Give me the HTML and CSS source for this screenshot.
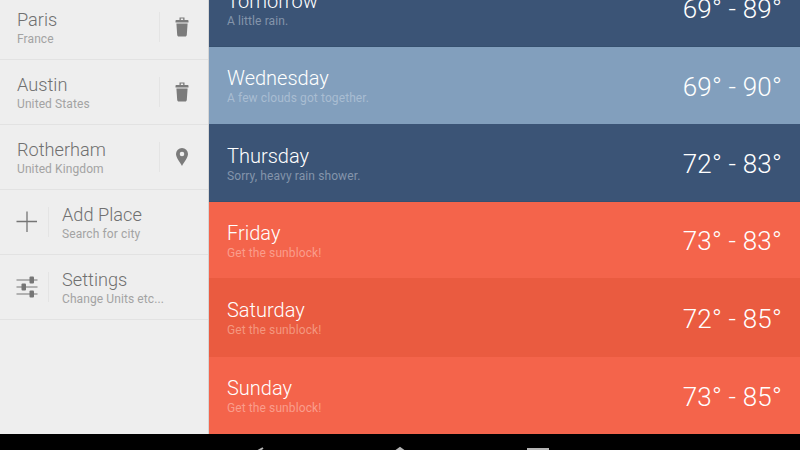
FILE: index.html
```html
<!DOCTYPE html>
<html lang="en">
<head>
<meta charset="utf-8">
<title>Weather</title>
<link rel="stylesheet" href="styles.css">
</head>
<body>
<div class="app">
  <aside class="side">
    <div class="place">
      <div class="text"><div class="name">Paris</div><div class="sub">France</div></div>
      <div class="action"><svg viewBox="0 0 14 20" width="14" height="20"><path fill-rule="evenodd" d="M4.500 .5h5v2.500h3.200c.5 0 .8.300.8.800v1.700H.5V3.800c0-.5.300-.8.800-.8h3.200z M5.800 1.600v1.400h2.400V1.600z M1.400 6.400h11.200l-.8 11.600c-.1.900-.7 1.500-1.600 1.500H3.800c-.9 0-1.500-.6-1.600-1.500z" fill="#7b7b7b"/></svg></div>
    </div>
    <div class="place">
      <div class="text"><div class="name">Austin</div><div class="sub">United States</div></div>
      <div class="action"><svg viewBox="0 0 14 20" width="14" height="20"><path fill-rule="evenodd" d="M4.500 .5h5v2.500h3.200c.5 0 .8.300.8.800v1.700H.5V3.800c0-.5.300-.8.800-.8h3.200z M5.800 1.600v1.400h2.400V1.600z M1.400 6.400h11.200l-.8 11.600c-.1.900-.7 1.500-1.600 1.500H3.800c-.9 0-1.500-.6-1.600-1.500z" fill="#7b7b7b"/></svg></div>
    </div>
    <div class="place">
      <div class="text"><div class="name">Rotherham</div><div class="sub">United Kingdom</div></div>
      <div class="action"><svg viewBox="0 0 14 20" width="14" height="20"><path fill-rule="evenodd" d="M7 1a6 6 0 0 1 6 6c0 3.600-3.600 7.600-6 12C4.600 14.600 1 10.600 1 7a6 6 0 0 1 6-6z M7 4.700a2.300 2.300 0 1 0 0 4.600a2.300 2.300 0 0 0 0-4.600z" fill="#7b7b7b"/></svg></div>
    </div>
    <div class="place">
      <div class="lead"><svg viewBox="0 0 22 22" width="22" height="22"><path d="M11 .5v20.500M.5 10.500h20.500" stroke="#757575" stroke-width="1.300" fill="none"/></svg></div>
      <div class="text"><div class="name">Add Place</div><div class="sub">Search for city</div></div>
    </div>
    <div class="place">
      <div class="lead"><svg viewBox="0 0 22 22" width="22" height="22"><g stroke="#757575" stroke-width="1.200" fill="none"><path d="M.5 4h21M.5 11h21M.5 18h21"/></g><g fill="#757575"><rect x="13.500" y="0.500" width="4.500" height="7" rx="1"/><rect x="5.500" y="7.500" width="4.500" height="7" rx="1"/><rect x="13.500" y="14.500" width="4.500" height="7" rx="1"/></g></svg></div>
      <div class="text"><div class="name">Settings</div><div class="sub">Change Units etc...</div></div>
    </div>
  </aside>
  <main class="days">
    <div class="day navy"><div class="text"><div class="title">Tomorrow</div><div class="note">A little rain.</div></div><div class="temp">69° - 89°</div></div>
    <div class="day sky"><div class="text"><div class="title">Wednesday</div><div class="note">A few clouds got together.</div></div><div class="temp">69° - 90°</div></div>
    <div class="day navy"><div class="text"><div class="title">Thursday</div><div class="note">Sorry, heavy rain shower.</div></div><div class="temp">72° - 83°</div></div>
    <div class="day coral"><div class="text"><div class="title">Friday</div><div class="note">Get the sunblock!</div></div><div class="temp">73° - 83°</div></div>
    <div class="day coral dark"><div class="text"><div class="title">Saturday</div><div class="note">Get the sunblock!</div></div><div class="temp">72° - 85°</div></div>
    <div class="day coral"><div class="text"><div class="title">Sunday</div><div class="note">Get the sunblock!</div></div><div class="temp">73° - 85°</div></div>
  </main>
</div>
<nav class="navbar">
  <svg class="back" viewBox="0 0 20 16" width="20" height="16"><path d="M16 1L4 8l12 7" stroke="#b5b5b5" stroke-width="2" fill="none"/></svg>
  <svg class="home" viewBox="0 0 24 16" width="24" height="16"><path d="M3 16V8.500L12 2l9 6.500V16" stroke="#b5b5b5" stroke-width="2" fill="none"/></svg>
  <svg class="recent" viewBox="0 0 24 16" width="24" height="16"><rect x="2" y="1" width="20" height="15" stroke="#b5b5b5" stroke-width="2" fill="none"/></svg>
</nav>
</body>
</html>
```
FILE: styles.css
```css
* { box-sizing: border-box; }
html, body { margin: 0; padding: 0; }
body {
  width: 800px;
  height: 450px;
  overflow: hidden;
  background: #000;
  font-family: Roboto, "Liberation Sans", sans-serif;
  display: flex;
  flex-direction: column;
}
.app {
  display: flex;
  height: 434px;
  overflow: hidden;
  flex: none;
}
.side {
  width: 209px;
  flex: none;
  height: 439px;
  margin-top: -5px;
  background: #eeeeee;
  border-right: 1px solid #d6d6d6;
}
.place {
  height: 65px;
  display: flex;
  align-items: center;
  padding-bottom: 1px;
  border-bottom: 1px solid #e2e2e2;
}
.place .text { flex: 1; min-width: 0; padding: 2px 0 0 17px; }
.lead + .text { padding-left: 13px; }
.name {
  font-size: 18.2px;
  font-weight: 300;
  color: #707070;
  line-height: 24px;
}
.sub {
  font-size: 12px;
  color: #a3a3a3;
  line-height: 15px;
  letter-spacing: 0.1px;
}
.action {
  width: 45px;
  height: 30px;
  flex: none;
  margin-right: 4px;
  border-left: 1px solid #e4e4e4;
  display: flex;
  align-items: center;
  justify-content: center;
}
.lead {
  width: 49px;
  height: 30px;
  flex: none;
  border-right: 1px solid #e4e4e4;
  display: flex;
  align-items: center;
  justify-content: center;
  padding-left: 5px;
}
.days {
  flex: 1;
  min-width: 0;
  height: 465px;
  margin-top: -31px;
  display: grid;
  grid-template-rows: 78px 77px 78px 76px 79px 77px;
}
.day {
  display: flex;
  align-items: center;
  justify-content: space-between;
  padding: 0 18px;
  color: #fff;
}
.day .text { padding-top: 1px; }
.title {
  font-size: 20px;
  font-weight: 300;
  line-height: 24px;
}
.note {
  font-size: 12px;
  line-height: 15px;
  margin-top: 1px;
  letter-spacing: 0.1px;
}
.temp {
  font-size: 26px;
  font-weight: 300;
  letter-spacing: 0.2px;
  padding-top: 2px;
}
.navy { background: #3b5476; box-shadow: inset 0 -1px 0 #36506f; }
.navy .note { color: #8494ab; }
.sky { background: #829fbd; }
.sky .note { color: #a9bdd2; }
.coral { background: #f4644b; }
.coral .note { color: #fa9d8b; }
.coral.dark { background: #ea5b40; }
.coral.dark .note { color: #f4977f; }
.navbar {
  height: 16px;
  flex: none;
  overflow: hidden;
  display: flex;
  align-items: flex-start;
}
.back { margin: 13px 0 0 247px; }
.home { margin: 12px 0 0 121px; }
.recent { margin: 14px 0 0 114px; }
```
